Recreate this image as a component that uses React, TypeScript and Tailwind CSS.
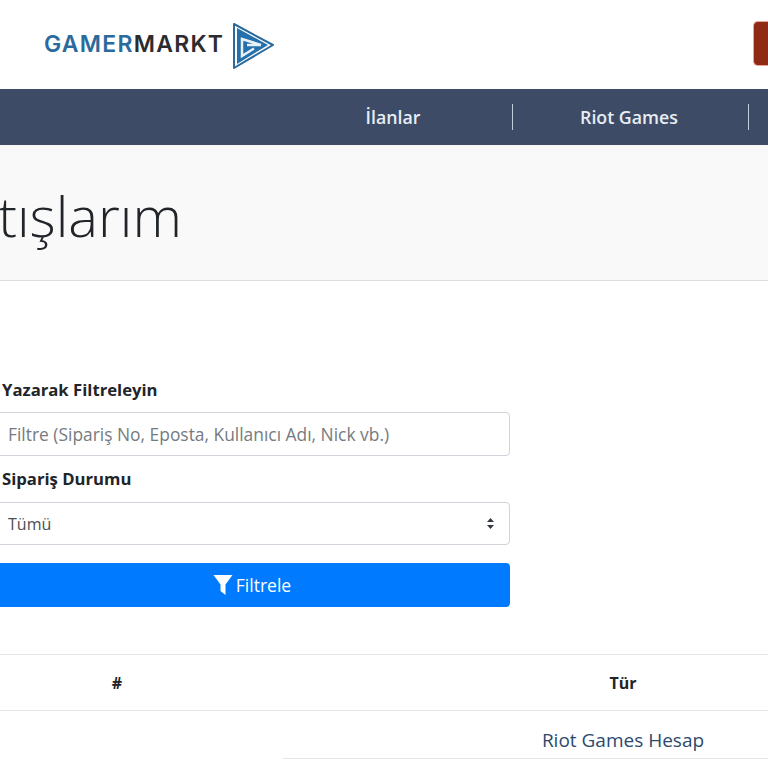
import React from 'react';

const NavItem: React.FC<{ label: string }> = ({ label }) => (
    <div className="w-[236px] h-[26px] flex items-center justify-center border-r border-[#c3ccd9]">
        <span className="text-[17.8px] font-semibold text-[#e6edf3] pr-[3px]">{label}</span>
    </div>
);

const Logo: React.FC = () => (
    <div className="flex items-center">
        <span className="text-[23px] font-semibold tracking-[1.25px] leading-none font-['Inter',sans-serif]">
            <span className="text-[#2b6a9c]">GAMER</span>
            <span className="text-[#2c2c30]">MARKT</span>
        </span>
        <svg className="ml-[8px] mt-[3px]" width="43" height="48" viewBox="0 0 43 48" fill="none">
            <path d="M2 2 L41 23 L2 46 Z" fill="#ffffff" stroke="#2b6a9c" strokeWidth="2" strokeLinejoin="round" />
            <path d="M5 6 L36 23 L5 42 Z" fill="#2470ad" />
            <path d="M29 23 L10 17 V34 L22 26.5 M29 23 H15" fill="none" stroke="#e8f1f8" strokeWidth="2.5" />
        </svg>
    </div>
);

const App: React.FC = () => {
    return (
        <div className="w-[768px] h-[768px] overflow-hidden bg-white font-['Open_Sans',sans-serif] text-[#212529]">
            <header className="h-[89px] flex items-center justify-between pl-[44px]">
                <Logo />
                <div className="w-[15px] h-[45px] mb-[2px] bg-[#8f2a14] rounded-l-[5px] border border-[#e8a79a] border-r-0" />
            </header>

            <nav className="h-[56px] bg-[#3d4b66] flex items-center pl-[277px]">
                <NavItem label="İlanlar" />
                <NavItem label="Riot Games" />
            </nav>

            <div className="h-[136px] bg-[#f9f9f9] border-b border-[#dcdfe2] flex items-center">
                <h1 className="ml-[-62px] text-[56px] font-light leading-none text-[#212529] mt-[4px]">Satışlarım</h1>
            </div>

            <form className="mt-[97px] w-[510px] pl-[2px]">
                <label className="block text-[16.7px] font-bold leading-[24px] text-[#212529]">Yazarak Filtreleyin</label>
                <div className="ml-[-12px] mt-[10px] h-[44px] bg-white border border-[#ced4da] rounded-[4px] flex items-center pl-[17px] text-[17.4px] text-[#757b80]">
                    Filtre (Sipariş No, Eposta, Kullanıcı Adı, Nick vb.)
                </div>
                <label className="block mt-[11px] text-[16.7px] font-bold leading-[24px] text-[#212529]">Sipariş Durumu</label>
                <div className="ml-[-12px] mt-[11px] h-[43px] bg-white border border-[#ced4da] rounded-[4px] flex items-center justify-between pl-[17px] pr-[14px] text-[16px] text-[#495057]">
                    <span>Tümü</span>
                    <svg width="9" height="13" viewBox="0 0 9 13" fill="#343a40">
                        <path d="M4.5 1 L8 5 H1 Z" />
                        <path d="M4.5 12 L8 8 H1 Z" />
                    </svg>
                </div>
                <button type="button" className="ml-[-12px] mt-[18px] w-[520px] h-[44px] bg-[#007bff] rounded-[4px] flex items-center justify-center gap-[3px] pl-[4px] text-[17.5px] text-white">
                    <svg width="20" height="22" viewBox="0 0 20 22" fill="#ffffff">
                        <path d="M0.5 1 H19.5 L12.5 10.5 V21 L7.5 17 V10.5 Z" />
                    </svg>
                    Filtrele
                </button>
            </form>

            <div className="mt-[47px] w-[1012px] grid grid-cols-[234px_778px] h-[57px] items-center border-y border-[#e4e6e9] text-[16px] font-bold text-[#212529]">
                <div className="text-center">#</div>
                <div className="text-center">Tür</div>
            </div>
            <div className="ml-[283px] w-[680px] h-[48px] flex items-center justify-center pt-[11px] border-b border-[#e4e6e9] text-[19px] text-[#2c4a6e]">
                Riot Games Hesap
            </div>
        </div>
    );
};

export default App;
